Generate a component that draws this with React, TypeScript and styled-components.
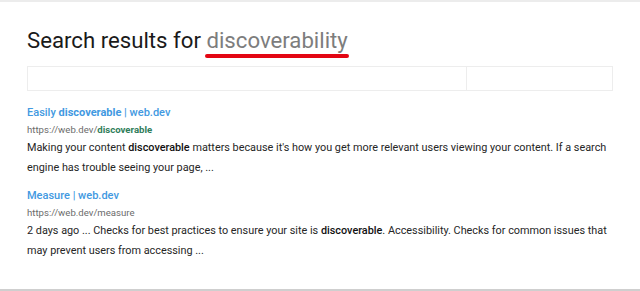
import React from 'react';
import styled, { createGlobalStyle } from 'styled-components';

const GlobalStyle = createGlobalStyle`
  html, body {
    margin: 0;
    padding: 0;
    background: #fff;
  }
  body {
    font-family: Roboto, "Liberation Sans", Arial, sans-serif;
  }
`;

type Result = {
  title: React.ReactNode;
  url: React.ReactNode;
  snippet: React.ReactNode;
};

// built lazily so the styled parts below exist by then
const getResults = (): Result[] => [
  {
    title: (
      <>
        Easily <b>discoverable</b> | web.dev
      </>
    ),
    url: (
      <>
        https://web.dev/<UrlMatch>discoverable</UrlMatch>
      </>
    ),
    snippet: (
      <>
        Making your content <b>discoverable</b> matters because it's how you get more relevant users viewing your
        content. If a search engine has trouble seeing your page, ...
      </>
    ),
  },
  {
    title: <>Measure | web.dev</>,
    url: <>https://web.dev/measure</>,
    snippet: (
      <>
        2 days ago ... Checks for best practices to ensure your site is <b>discoverable</b>. Accessibility. Checks for
        common issues that may prevent users from accessing ...
      </>
    ),
  },
];

export default function App() {
  const results = getResults();
  return (
    <>
      <GlobalStyle />
      <Frame>
        <Heading>
          Search results for <Query>discoverability</Query>
        </Heading>
        <SearchBar>
          <SearchInput />
          <SearchButton />
        </SearchBar>
        <ResultList>
          {results.map((r, i) => (
            <ResultItem key={i}>
              <ResultTitle>{r.title}</ResultTitle>
              <ResultUrl>{r.url}</ResultUrl>
              <Snippet>{r.snippet}</Snippet>
            </ResultItem>
          ))}
        </ResultList>
      </Frame>
    </>
  );
}

const Frame = styled.div`
  box-sizing: border-box;
  width: 640px;
  height: 291px;
  border-top: 2px solid #ececec;
  border-bottom: 2px solid #cfcfcf;
  padding: 24px 26px 0 27px;
`;

const Heading = styled.h1`
  margin: 0;
  font-size: 22.2px;
  font-weight: 400;
  line-height: 28px;
  color: #1a1a1a;
`;

const Query = styled.span`
  position: relative;
  color: #7d7d7d;

  &::after {
    content: '';
    position: absolute;
    left: -1px;
    right: -1px;
    bottom: -5px;
    height: 4px;
    border-radius: 2px;
    background: #e30613;
  }
`;

const SearchBar = styled.div`
  display: flex;
  margin: 12px 1px 0 0;
  height: 23px;
  border: 1px solid #ededed;
`;

const SearchInput = styled.div`
  flex: 1;
  border-right: 1px solid #ededed;
`;

const SearchButton = styled.div`
  width: 145px;
`;

const ResultList = styled.div`
  display: flex;
  flex-direction: column;
  gap: 9px;
  margin-top: 13px;
`;

const ResultItem = styled.div`
  display: flex;
  flex-direction: column;
`;

const ResultTitle = styled.div`
  font-size: 11px;
  line-height: 17px;
  font-weight: 500;
  color: #4299e1;

  b {
    font-weight: 700;
  }
`;

const ResultUrl = styled.div`
  font-size: 9.6px;
  line-height: 17px;
  color: #6b6b6b;
`;

const UrlMatch = styled.span`
  font-weight: 700;
  color: #2f7d5a;
`;

const Snippet = styled.div`
  font-size: 10.85px;
  line-height: 20px;
  color: #262626;

  b {
    font-weight: 500;
    color: #111;
  }
`;
